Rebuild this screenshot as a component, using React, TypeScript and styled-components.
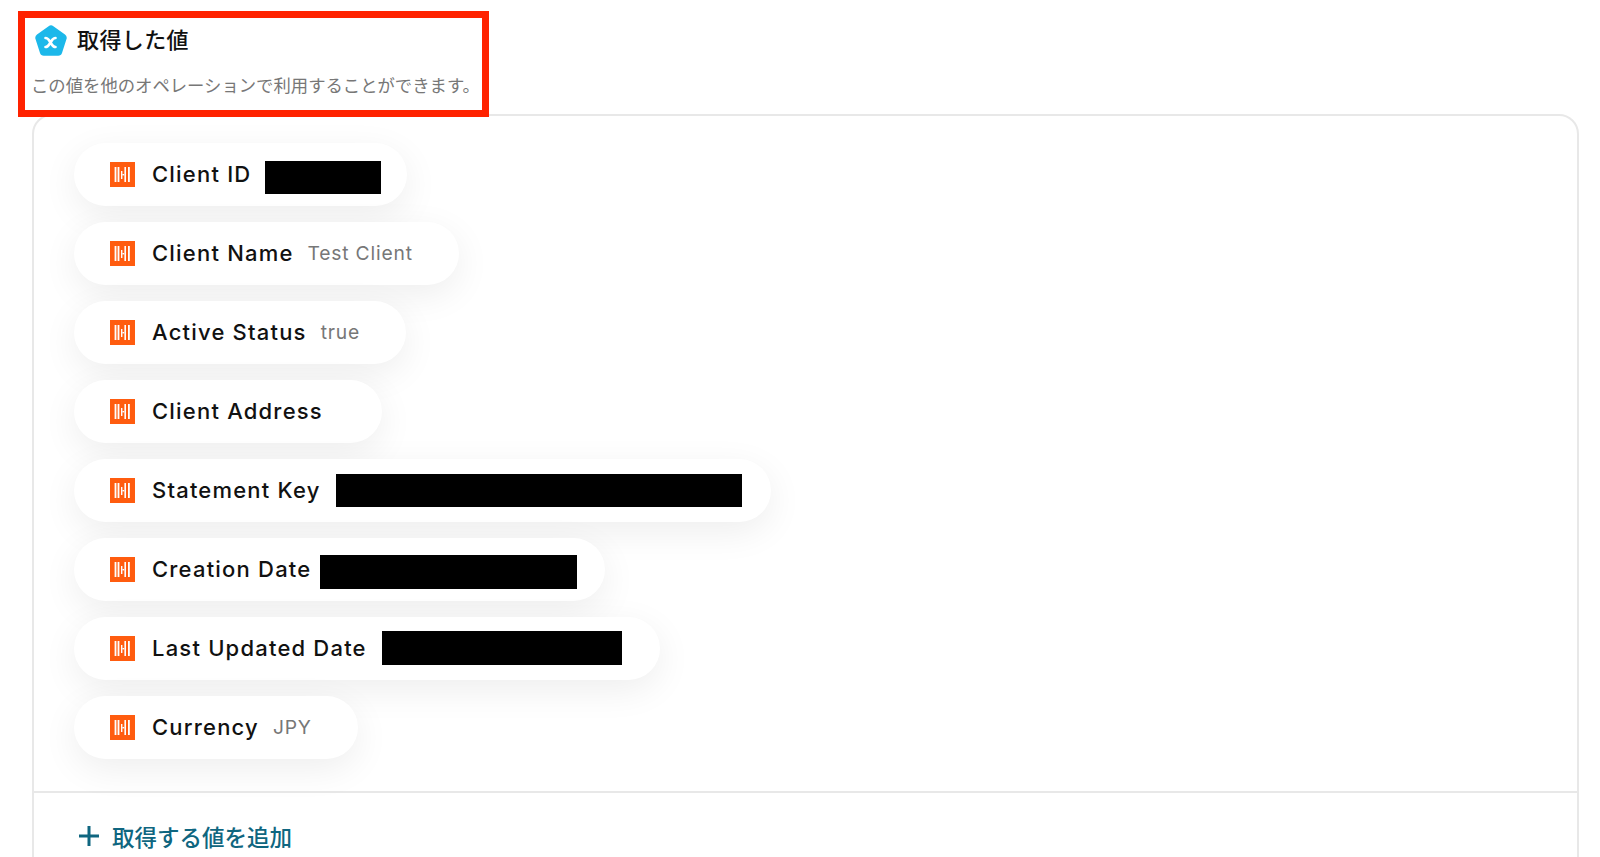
import React from "react";
import styled, { createGlobalStyle } from "styled-components";

const GlobalStyle = createGlobalStyle`
  html, body {
    margin: 0;
    height: 100%;
    overflow: hidden;
    background: #fff;
  }
  body {
    font-family: Inter, "Noto Sans CJK JP", sans-serif;
  }
`;

type Field = {
  label: string;
  value?: string;
  redactWidth?: number;
  redactHeight?: number;
  redactGap?: number;
  redactShift?: number;
  paddingRight?: number;
};

const fields: Field[] = [
  { label: "Client ID", redactWidth: 116, redactHeight: 33, redactGap: 14, redactShift: 3, paddingRight: 26 },
  { label: "Client Name", value: "Test Client" },
  { label: "Active Status", value: "true" },
  { label: "Client Address", paddingRight: 59 },
  { label: "Statement Key", redactWidth: 406, redactHeight: 33, redactGap: 15, paddingRight: 29 },
  { label: "Creation Date", redactWidth: 257, redactHeight: 34, redactGap: 9, redactShift: 2, paddingRight: 28 },
  { label: "Last Updated Date", redactWidth: 240, redactHeight: 34, redactGap: 15, redactShift: -1, paddingRight: 38 },
  { label: "Currency", value: "JPY" },
];

const HtmlIcon: React.FC = () => (
  <IconBox viewBox="0 0 25 25">
    <rect width="25" height="25" fill="#ff5c0f" />
    <g fill="#fff">
      <rect x="4.6" y="5" width="1.8" height="15" />
      <rect x="7.6" y="5" width="1.8" height="15" />
      <rect x="11" y="9" width="1.4" height="8" />
      <rect x="12.4" y="12" width="1.8" height="1.4" />
      <rect x="14.4" y="5" width="1.6" height="15" />
      <rect x="18" y="5" width="1.8" height="15" />
    </g>
  </IconBox>
);

const PentagonIcon: React.FC = () => (
  <svg width="32" height="31" viewBox="0 0 32 31">
    <path
      d="M13.6 1.2 a4 4 0 0 1 4.8 0 L30 9.6 a4 4 0 0 1 1.5 4.5 L27 27.9 a4 4 0 0 1 -3.8 2.8 H8.8 a4 4 0 0 1 -3.8 -2.8 L0.5 14.1 a4 4 0 0 1 1.5 -4.5 Z"
      fill="#1cb8ea"
    />
    <path
      d="M10.5 13 C13.5 13 14 15.5 15.5 17.5 C17 19.5 17.5 22 20.5 22 M20.5 13 C17.5 13 17 15.5 15.5 17.5 C14 19.5 13.5 22 10.5 22"
      fill="none"
      stroke="#fff"
      strokeWidth="2.6"
      strokeLinecap="round"
    />
  </svg>
);

const App: React.FC = () => (
  <>
    <GlobalStyle />
    <Page>
      <Header>
        <TitleRow>
          <PentagonIcon />
          <Title>取得した値</Title>
        </TitleRow>
        <Description>この値を他のオペレーションで利用することができます。</Description>
      </Header>
      <Card>
        <FieldList>
          {fields.map((field) => (
            <Pill key={field.label} $paddingRight={field.paddingRight ?? 46}>
              <HtmlIcon />
              <Label>{field.label}</Label>
              {field.value && <Value>{field.value}</Value>}
              {field.redactWidth && (
                <Redaction
                  $width={field.redactWidth}
                  $height={field.redactHeight ?? 33}
                  $gap={field.redactGap ?? 15}
                  $shift={field.redactShift ?? 0}
                />
              )}
            </Pill>
          ))}
        </FieldList>
        <Footer>
          <AddButton>
            <PlusIcon viewBox="0 0 22 22">
              <path d="M11 1V21M1 11H21" stroke="#0f6680" strokeWidth="3" fill="none" />
            </PlusIcon>
            取得する値を追加
          </AddButton>
        </Footer>
      </Card>
    </Page>
  </>
);

const Page = styled.div`
  width: 1600px;
  height: 857px;
  padding: 11px 21px 0 18px;
  box-sizing: border-box;
  overflow: hidden;
`;

const Header = styled.header`
  position: relative;
  z-index: 1;
  box-sizing: border-box;
  width: 471px;
  height: 106px;
  border: 7.5px solid #ff2200;
  background: #fff;
  padding: 6px 0 0 6px;
`;

const TitleRow = styled.div`
  display: flex;
  align-items: center;
  gap: 10px;
  margin-left: 4px;
  height: 32px;
`;

const Title = styled.h2`
  margin: 0 0 4px;
  font-size: 22px;
  font-weight: 500;
  letter-spacing: 0.4px;
  color: #111;
`;

const Description = styled.p`
  margin: 18px 0 0;
  font-size: 17.35px;
  line-height: 24px;
  color: #777;
  white-space: nowrap;
`;

const Card = styled.section`
  box-sizing: border-box;
  margin: -3px 0 0 14px;
  height: 780px;
  border: 2px solid #e8e8e8;
  border-radius: 20px;
  background: #fff;
`;

const FieldList = styled.div`
  display: flex;
  flex-direction: column;
  align-items: flex-start;
  gap: 16px;
  padding: 27px 0 32px 40px;
  border-bottom: 2px solid #e8e8e8;
`;

const Pill = styled.div<{ $paddingRight: number }>`
  display: flex;
  align-items: center;
  height: 63px;
  box-sizing: border-box;
  padding: 0 ${(p) => p.$paddingRight}px 2px 36px;
  border-radius: 32px;
  background: #fff;
  box-shadow: 0 10px 36px rgba(0, 0, 0, 0.07);
`;

const IconBox = styled.svg`
  width: 25px;
  height: 25px;
  flex-shrink: 0;
  margin-top: 2px;
`;

const Label = styled.span`
  margin-left: 17px;
  font-size: 22px;
  font-weight: 500;
  letter-spacing: 1.2px;
  color: #111;
  white-space: nowrap;
`;

const Value = styled.span`
  margin-left: 14px;
  font-size: 19.3px;
  letter-spacing: 0.8px;
  color: #777;
  white-space: nowrap;
`;

const Redaction = styled.span<{ $width: number; $height: number; $gap: number; $shift: number }>`
  display: block;
  width: ${(p) => p.$width}px;
  height: ${(p) => p.$height}px;
  margin-left: ${(p) => p.$gap}px;
  margin-top: ${(p) => p.$shift * 2 + 2}px;
  background: #000;
`;

const Footer = styled.div`
  padding: 27px 0 0 44px;
`;

const AddButton = styled.div`
  display: flex;
  align-items: center;
  gap: 12px;
  font-size: 22.5px;
  font-weight: 500;
  color: #0f6680;
  white-space: nowrap;
`;

const PlusIcon = styled.svg`
  width: 22px;
  height: 22px;
  flex-shrink: 0;
`;

export default App;
